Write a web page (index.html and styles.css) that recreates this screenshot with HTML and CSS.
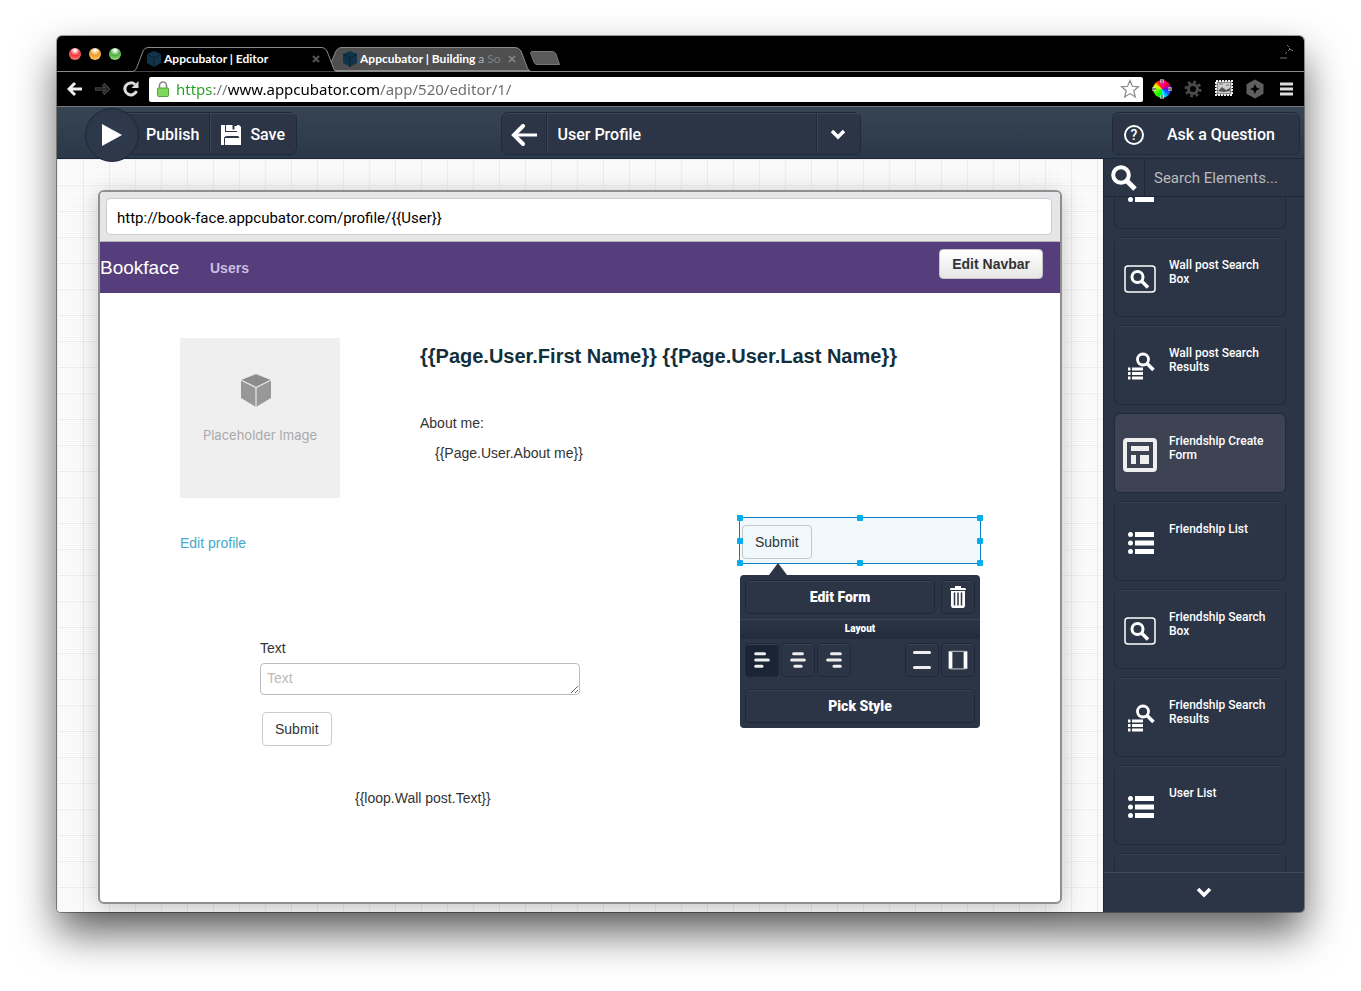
FILE: index.html
```html
<!DOCTYPE html>
<html lang="en">
<head>
<meta charset="utf-8">
<title>Appcubator | Editor</title>
<link rel="stylesheet" href="styles.css">
</head>
<body>
<svg class="defs" aria-hidden="true">
  <symbol id="cube" viewBox="0 0 14 16"><path d="M7 0l7 3v9l-7 4-7-4V3z" fill="#12344a"/><path d="M0 3l7 4 7-4M7 7v9" fill="none" stroke="#05202f" stroke-width="1"/></symbol>
  <symbol id="lens" viewBox="0 0 26 26"><circle cx="10" cy="10" r="7.8" fill="none" stroke="#fff" stroke-width="4"/><path d="M16 16l8 8" stroke="#fff" stroke-width="5"/></symbol>
  <symbol id="list" viewBox="0 0 34 34"><g fill="#fff"><circle cx="7.500" cy="8.500" r="2.500"/><circle cx="7.500" cy="17" r="2.500"/><circle cx="7.500" cy="25.500" r="2.500"/><path d="M12 6h19v5H12zM12 14.500h19v5H12zM12 23h19v5H12z"/></g></symbol>
  <symbol id="searchbox" viewBox="0 0 34 34"><rect x="2" y="4" width="30" height="26" rx="3" fill="none" stroke="#fff" stroke-width="1.500"/><circle cx="14.500" cy="15" r="5.500" fill="none" stroke="#fff" stroke-width="3"/><path d="M18.500 19l6.500 6.500" stroke="#fff" stroke-width="3.500"/></symbol>
  <symbol id="results" viewBox="0 0 34 34"><circle cx="20" cy="9.500" r="5.500" fill="none" stroke="#fff" stroke-width="2.800"/><path d="M24 13.500l6.500 6.500" stroke="#fff" stroke-width="3.500"/><path d="M5 17.500h2.500v3H5zM5 22h2.500v3H5zM5 26.500h2.500v3H5zM9 17.500h11v3H9zM9 22h11v3H9zM9 26.500h11v3H9z" fill="#fff"/></symbol>
  <symbol id="form" viewBox="0 0 34 34"><rect x="2" y="2" width="30" height="30" rx="2" fill="none" stroke="#eee" stroke-width="4"/><path d="M8 8h18v5H8zM8 17h5v9H8zM17 17h9v9h-9z" fill="#eee"/></symbol>
  <symbol id="down" viewBox="0 0 16 11"><path d="M2 2l6 6 6-6" fill="none" stroke="#fff" stroke-width="3.500"/></symbol>
</svg>

<div class="window">
  <div class="tabstrip">
    <div class="lights"><button class="light red" aria-label="Close"></button><button class="light amber" aria-label="Minimize"></button><button class="light green" aria-label="Zoom"></button></div>
    <div class="tab tab-active">
      <svg class="tab-shape" viewBox="0 0 204 25"><path d="M0 24.500Q3 23.500 4 20L10 4Q11.500 .500 15 .500H189Q192 .500 194 4L200 20Q201 24.500 204 24.500" fill="#000" stroke="#8a8a8a"/></svg>
      <svg class="favicon"><use href="#cube"/></svg><span class="tab-title">Appcubator | Editor</span><button class="tab-close" aria-label="Close tab"><svg viewBox="0 0 8 8"><path d="M1 1l6 6M7 1L1 7" stroke="#555" stroke-width="2"/></svg></button>
    </div>
    <div class="tab tab-back">
      <svg class="tab-shape" viewBox="0 0 204 25"><path d="M4 23.500Q2 22 1 18L7 4Q9 .500 12 .500H186Q190 .500 192 4L198 20Q199 23.500 201 23.500z" fill="#4f4f4f" stroke="#8a8a8a"/></svg>
      <svg class="favicon"><use href="#cube"/></svg><span class="tab-title">Appcubator | Building <span class="fade1">a</span> <span class="fade2">So</span></span><button class="tab-close" aria-label="Close tab"><svg viewBox="0 0 8 8"><path d="M1 1l6 6M7 1L1 7" stroke="#8a8a8a" stroke-width="1.500"/></svg></button>
    </div>
    <button class="newtab" aria-label="New tab"><svg viewBox="0 0 30 14"><path d="M3 .500H22Q25 .500 26 3L29.500 13.500H7Q5 13.500 4 11L.500 2Q.500 .500 3 .500z" fill="#5a5a5a" stroke="#777"/></svg></button>
    <svg class="expand" viewBox="0 0 14 14"><path d="M0 13h7M5 9l2-2M7 0l2 2M8 6l2-2 3 2M9 3l1 1" stroke="#777" fill="none"/></svg>
  </div>

  <div class="toolbar">
    <button class="nav" aria-label="Back"><svg viewBox="0 0 16 14"><path d="M8 1L2 7l6 6M2 7h13" fill="none" stroke="#eee" stroke-width="3"/></svg></button>
    <button class="nav" aria-label="Forward"><svg viewBox="0 0 16 14"><path d="M8 2l5 5-5 5M0 7h12" fill="none" stroke="#444" stroke-width="3.500"/><path d="M8 2l5 5-5 5M1 7h11" fill="none" stroke="#111" stroke-width="1"/></svg></button>
    <button class="nav reload" aria-label="Reload"><svg viewBox="0 0 16 16"><path d="M13.500 10A6 6 0 1 1 12 3.500" fill="none" stroke="#ddd" stroke-width="3"/><path d="M15.500 0v7H8.500z" fill="#ddd"/></svg></button>
    <div class="omnibox">
      <svg class="lock" viewBox="0 0 12 16"><path d="M2.500 8V4.500a3.500 3.500 0 0 1 7 0V8" fill="none" stroke="#888" stroke-width="1.600"/><rect x=".5" y="7" width="11" height="8.500" rx="1" fill="#7fd85c" stroke="#55a33a"/></svg>
      <input class="address" aria-label="Address" value="https://www.appcubator.com/app/520/editor/1/">
      <svg class="star" viewBox="0 0 20 20"><path d="M10 1.500l2.400 5.800 6.100.500-4.700 4 1.500 6.200-5.300-3.400L4.700 18l1.500-6.200-4.700-4 6.100-.500z" fill="#fff" stroke="#888" stroke-width="1.200"/></svg>
    </div>
    <div class="extensions">
      <button class="ext wheel" aria-label="Color picker"><span class="disc"></span><svg viewBox="0 0 20 20"><path d="M10 0v4M10 16v4M0 10h4M16 10h4" stroke="#fff" stroke-width="3"/><path d="M10 0v4M10 16v4M0 10h4M16 10h4" stroke="#000"/></svg></button>
      <button class="ext" aria-label="Settings"><svg viewBox="0 0 20 20"><circle cx="10" cy="10" r="4.500" fill="none" stroke="#4a4a4a" stroke-width="3"/><circle cx="10" cy="10" r="7" fill="none" stroke="#4a4a4a" stroke-width="3" stroke-dasharray="2.750"/></svg></button>
      <button class="ext" aria-label="Screenshot"><svg viewBox="0 0 20 20"><rect x="2" y="2" width="16" height="14" fill="#888" stroke="#eee" stroke-width="2" stroke-dasharray="2 1"/><rect x="4" y="4" width="12" height="10" fill="#ccc"/><path d="M4 12l4-4 4 3 4-2v3l-6 1z" fill="#555"/><path d="M5 5h4M12 6h3" stroke="#777"/></svg></button>
      <button class="ext" aria-label="Extension"><svg viewBox="0 0 20 20"><path d="M10 .500l8.500 4.800v9.500L10 19.500l-8.500-4.700V5.300z" fill="#5f5f5f"/><path d="M10 5l1.500 3.500L15 10l-3.500 1.500L10 15l-1.500-3.500L5 10l3.500-1.500z"/></svg></button>
      <button class="ext" aria-label="Menu"><svg viewBox="0 0 20 20"><path d="M4 5h13M4 10h13M4 15h13" stroke="#ddd" stroke-width="3"/></svg></button>
    </div>
  </div>

  <header class="appbar">
    <div class="group publish-group">
      <button class="play" aria-label="Run"><svg viewBox="0 0 22 24"><path d="M1 1l20 11L1 23z" fill="#fff"/></svg></button>
      <button class="cell publish">Publish</button>
      <button class="cell save"><svg viewBox="0 0 20 20"><path d="M0 0h4v7h12V0h2l2 2v18h-2v-8H4l-1 8H0z" fill="#fff"/><path d="M5 0h7v6H5zM4 13h15v7H4z" fill="#fff"/><path d="M12 1h4v5h-4z" fill="#fff"/><path d="M12.500 0v4.500" stroke="#2c3546" stroke-width="2"/><path d="M3.500 18v-5q0-1.500 2-1.500h12" fill="none" stroke="#2c3546"/></svg>Save</button>
    </div>
    <div class="group page-group">
      <button class="cell back" aria-label="Back to pages"><svg viewBox="0 0 26 22"><path d="M12 2l-9 9 9 9" fill="none" stroke="#fff" stroke-width="4" stroke-linecap="round"/><path d="M3 11h23" stroke="#fff" stroke-width="3"/></svg></button>
      <button class="cell page-name">User Profile</button>
      <button class="cell caret" aria-label="Choose page"><svg><use href="#down"/></svg></button>
    </div>
    <button class="group ask"><span class="qmark">?</span><span>Ask a Question</span></button>
  </header>

  <div class="workspace">
    <main class="desk">
      <div class="frame">
        <div class="urlbar"><input class="page-url" aria-label="Page URL" value="http://book-face.appcubator.com/profile/{{User}}"></div>
        <nav class="navbar"><a class="brand" href="#">Bookface</a><a class="navlink" href="#">Users</a><button class="edit-navbar">Edit Navbar</button></nav>
        <div class="canvas">
          <div class="placeholder">
            <svg viewBox="0 0 32 34"><path d="M16 0l15 6v18L16 33 1 24V6z" fill="#989898"/><path d="M16 1l14 5-14 7L2 6z" fill="#8c8c8c"/><path d="M1 6l15 7.500L31 6M16 13.500V33" fill="none" stroke="#e6e6e6" stroke-width="1.200"/></svg>
            <span>Placeholder Image</span>
          </div>
          <h1 class="name">{{Page.User.First Name}} {{Page.User.Last Name}}</h1>
          <p class="about-label">About me:</p>
          <p class="about">{{Page.User.About me}}</p>
          <a class="edit-profile" href="#">Edit profile</a>
          <div class="selected">
            <button class="btn">Submit</button>
            <i class="handle nw"></i><i class="handle n"></i><i class="handle ne"></i><i class="handle w"></i><i class="handle e"></i><i class="handle sw"></i><i class="handle s"></i><i class="handle se"></i>
            <div class="popup">
              <div class="popup-row">
                <button class="tool wide">Edit Form</button>
                <button class="tool" aria-label="Delete"><svg viewBox="0 0 16 22"><path d="M5 0h6v2h4q1 0 1 2H0Q0 2 1 2h4zM1 5h14v14q0 3-2 3H3q-2 0-2-3z" fill="#fff"/><path d="M4.500 6.500v13M8 6.500v13M11.500 6.500v13" stroke="#2c3546" stroke-width="1.500"/></svg></button>
              </div>
              <div class="popup-title">Layout</div>
              <div class="popup-row layout-row">
                <button class="tool pressed" aria-label="Align left"><svg viewBox="0 0 16 16"><path d="M3 3h7M3 8h10M3 13h5" class="bars"/></svg></button>
                <button class="tool" aria-label="Align center"><svg viewBox="0 0 16 16"><path d="M4.500 3h7M3 8h10M5.500 13h5" class="bars"/></svg></button>
                <button class="tool" aria-label="Align right"><svg viewBox="0 0 16 16"><path d="M6 3h7M3 8h10M8 13h5" class="bars"/></svg></button>
                <span class="spacer"></span>
                <button class="tool" aria-label="Vertical padding"><svg viewBox="0 0 16 16"><path d="M2 2h12M2 14h12" class="bars"/></svg></button>
                <button class="tool" aria-label="Horizontal padding"><svg viewBox="0 0 16 16"><path d="M2 1v14M14 1v14" stroke="#fff" stroke-width="3"/><path d="M2 1h12M2 15h12" stroke="#aaa" stroke-width="1"/></svg></button>
              </div>
              <div class="popup-row"><button class="tool wide">Pick Style</button></div>
            </div>
          </div>
          <form class="post-form">
            <label for="post-text">Text</label>
            <textarea id="post-text" placeholder="Text"></textarea>
            <button class="btn" type="button">Submit</button>
          </form>
          <p class="loop">{{loop.Wall post.Text}}</p>
        </div>
      </div>
    </main>

    <aside class="sidebar">
      <div class="search"><label for="element-search" aria-label="Search elements"><svg><use href="#lens"/></svg></label><input id="element-search" placeholder="Search Elements..."></div>
      <div class="cards">
        <div class="cards-inner">
          <button class="card" aria-label="List"><svg><use href="#list"/></svg></button>
          <button class="card"><svg><use href="#searchbox"/></svg><span>Wall post Search Box</span></button>
          <button class="card"><svg><use href="#results"/></svg><span>Wall post Search Results</span></button>
          <button class="card current"><svg><use href="#form"/></svg><span>Friendship Create Form</span></button>
          <button class="card"><svg><use href="#list"/></svg><span>Friendship List</span></button>
          <button class="card"><svg><use href="#searchbox"/></svg><span>Friendship Search Box</span></button>
          <button class="card"><svg><use href="#results"/></svg><span>Friendship Search Results</span></button>
          <button class="card"><svg><use href="#list"/></svg><span>User List</span></button>
          <button class="card" aria-label="More elements"></button>
        </div>
      </div>
      <button class="more" aria-label="Scroll down"><svg><use href="#down"/></svg></button>
    </aside>
  </div>
</div>
</body>
</html>
```

FILE: styles.css
```css
* { box-sizing: border-box; }
body {
  margin: 0;
  min-height: 100vh;
  padding: 36px 57px 79px;
  display: flex;
  background: #fff;
  font: 14px/20px "Liberation Sans", Arial, sans-serif;
  color: #333;
}
button, input, textarea { font: inherit; color: inherit; margin: 0; padding: 0; border: 0; background: none; border-radius: 0; outline: 0; }
button { cursor: pointer; }
a { text-decoration: none; }
p, h1 { margin: 0; }
svg { display: block; flex: none; }
.defs { position: absolute; width: 0; height: 0; }

.window {
  flex: 1;
  min-width: 0;
  display: flex;
  flex-direction: column;
  border-radius: 5px 5px 4px 4px;
  box-shadow: 0 0 0 1px rgba(0, 0, 0, .35), 0 21px 42px rgba(0, 0, 0, .62);
}

/* Tab strip */
.tabstrip {
  height: 36px;
  display: flex;
  align-items: flex-end;
  background: #000;
  border-bottom: 1px solid #8a8a8a;
  border-radius: 5px 5px 0 0;
}
.lights { display: flex; gap: 8px; padding: 0 12px; align-self: center; width: 76px; }
.light { width: 12px; height: 12px; border-radius: 6px; }
.red { background: radial-gradient(circle at 50% 20%, #fff 5%, #f0383c 45%, #ff9a90); }
.amber { background: radial-gradient(circle at 50% 20%, #fff 5%, #ee9a28 45%, #ffe070); }
.green { background: radial-gradient(circle at 50% 20%, #fff 5%, #4fae43 45%, #b5f09a); }
.tab {
  position: relative;
  width: 196px;
  height: 24px;
  display: flex;
  align-items: center;
  padding: 0 9px 0 14px;
  color: #fff;
  font: bold 12px/16px "Lato", sans-serif;
}
.tab-active { z-index: 1; }
.tab-shape { position: absolute; left: 0; top: 0; width: 204px; height: 25px; }
.favicon { position: relative; width: 14px; height: 16px; margin-right: 3px; }
.tab-title { position: relative; flex: 1; white-space: nowrap; }
.fade1 { color: #b5b5b5; font-weight: normal; }
.fade2 { color: #808080; font-weight: normal; }
.tab-close { position: relative; }
.tab-close svg { width: 8px; height: 8px; }
.newtab { align-self: center; margin: 9px 0 0 5px; }
.newtab svg { width: 30px; height: 14px; }
.expand { width: 14px; height: 14px; margin: auto 10px 12px auto; }

/* Address row */
.toolbar {
  height: 35px;
  display: flex;
  align-items: center;
  padding: 0 8px 0 10px;
  background: #000;
  border-bottom: 1px solid #777;
}
.nav { width: 28px; }
.nav svg { width: 16px; height: 16px; }
.reload { width: 26px; }
.omnibox { flex: 1; height: 25px; display: flex; align-items: center; padding: 0 3px 0 8px; background: #fff; border-radius: 2px; }
.lock { width: 12px; height: 16px; }
.address {
  flex: 1;
  min-width: 0;
  height: 24px;
  margin-left: 7px;
  font: 15px/24px "Noto Sans", sans-serif;
  color: #666;
  background: linear-gradient(90deg, #1fa01f 36px, #777 36px, #777 52px, #000 52px, #000 204px, #6a6a6a 204px);
  -webkit-background-clip: text;
  background-clip: text;
  -webkit-text-fill-color: transparent;
}
.star { width: 20px; height: 20px; }
.extensions { display: flex; gap: 11px; margin-left: 9px; }
.ext { position: relative; width: 20px; height: 20px; }
.ext svg { position: relative; width: 20px; height: 20px; }
.disc { position: absolute; inset: 1px; border-radius: 50%; background: conic-gradient(#f0c, #f03, #60f 90deg, #07f, #0ff 170deg, #0f0 200deg, #8f0 270deg, #fe0, #f20 330deg, #f0c); }

/* Editor header */
.appbar {
  position: relative;
  z-index: 2;
  height: 52px;
  display: grid;
  grid-template-columns: 1fr 360px 1fr;
  align-items: center;
  padding: 2px 4px 0;
  background: linear-gradient(#374453, #2b3849);
  border-bottom: 1px solid #1c2738;
  font: 500 16px/20px "Roboto", sans-serif;
  color: #fff;
}
.group { height: 43px; display: flex; background: #2c3546; border: 1px solid #1e293a; border-radius: 7px; box-shadow: inset 0 1px #394454; }
.publish-group { justify-self: start; margin-left: 48px; }
.play {
  width: 54px;
  height: 54px;
  margin: -5px 0 0 -25px;
  display: grid;
  place-items: center;
  background: radial-gradient(#303d4e, #2a3446);
  border: 1px solid #1c2738;
  border-radius: 50%;
}
.play svg { width: 22px; height: 24px; }
.cell { display: flex; align-items: center; justify-content: center; padding-top: 2px; }
.cell + .cell { border-left: 1px solid #1e293a; box-shadow: inset 1px 1px #394454; }
.publish { padding: 2px 10px 0 7px; }
.save { gap: 9px; padding: 2px 11px 0; }
.save svg { width: 20px; height: 20px; }
.back { width: 44px; }
.back svg { width: 26px; height: 22px; }
.page-name { flex: 1; justify-content: flex-start; padding: 2px 11px 0; }
.caret { width: 44px; }
.caret svg { width: 16px; height: 11px; }
.ask { justify-self: end; width: 188px; align-items: center; gap: 23px; padding: 2px 0 0 11px; }
.qmark { width: 20px; height: 20px; border: 2px solid #fff; border-radius: 50%; font-size: 14px; line-height: 16px; text-align: center; }

/* Workspace */
.workspace { flex: 1; display: flex; min-height: 0; }
.desk {
  flex: 1;
  min-width: 0;
  padding: 31px 41px 8px;
  display: flex;
  border-radius: 0 0 0 4px;
  background:
    linear-gradient(90deg, transparent 25px, #ededed 25px) 1px 0 / 26px 26px,
    linear-gradient(transparent 25px, #ededed 25px) 0 1px / 26px 26px,
    conic-gradient(#f1f1f1 25%, transparent 0) 0 0 / 2px 2px #fcfcfc;
}
.frame {
  flex: 1;
  min-width: 0;
  display: flex;
  flex-direction: column;
  border: 2px solid #8f8f91;
  border-radius: 6px;
  background: #fff;
  box-shadow: 0 4px 22px rgba(0, 0, 0, .22);
}
.urlbar { padding: 6px 8px 6px 6px; background: #e6e6e8; border-bottom: 1px solid #b4b4b6; border-radius: 4px 4px 0 0; }
.page-url { display: block; width: 100%; height: 37px; padding: 2px 10px 0; background: #fff; border: 1px solid #ccc; border-radius: 4px; color: #000; font: 15px/20px "Roboto", sans-serif; }
.navbar { height: 51px; display: flex; align-items: center; background: #563d7c; padding-right: 17px; }
.brand { width: 110px; color: #fff; font-size: 19px; }
.navlink { color: #cbbde2; font-weight: bold; }
.edit-navbar { height: 30px; margin: 0 0 8px auto; padding: 0 12px; background: linear-gradient(#fff, #e6e6e6); border: 1px solid #c5c5c5; border-radius: 4px; font-weight: bold; }

/* Page content snaps to 12 columns and 15px rows */
.canvas { flex: 1; display: grid; grid-template-columns: repeat(12, minmax(0, 1fr)); grid-auto-rows: 15px; }
.canvas > * { white-space: nowrap; }
.placeholder { grid-area: 4 / 2 / span 11 / span 2; height: 160px; display: flex; flex-direction: column; align-items: center; gap: 17px; padding-top: 36px; background: #efefef; color: #aaa; font: 13px/20px "Inter", sans-serif; }
.placeholder svg { width: 32px; height: 34px; margin-right: 8px; }
.name { grid-area: 4 / 5 / span 3 / span 8; font-size: 20px; line-height: 36px; color: #12303c; }
.about-label { grid-area: 9 / 5 / span 2 / span 4; }
.about { grid-area: 11 / 5 / span 2 / span 4; padding-left: 15px; }
.edit-profile { grid-area: 17 / 2 / span 2 / span 2; color: #46a9cb; }
.loop { grid-area: 34 / 4 / span 2 / span 4; padding-left: 15px; }
.btn { height: 34px; padding: 0 12px; margin-left: 2px; border: 1px solid #ccc; border-radius: 4px; font-size: 14px; }
.post-form { grid-area: 24 / 3 / span 8 / span 4; }
.post-form label { display: block; margin-bottom: 5px; }
.post-form textarea { display: block; width: 100%; height: 32px; padding: 4px 6px; margin-bottom: 17px; border: 1px solid #bbb; border-radius: 4px; }
.post-form textarea::placeholder { color: #bbb; }

.selected { position: relative; grid-area: 16 / 9 / span 3 / span 3; margin: -1px; padding: 7px 0 0; background: #f0f8fb; border: 1px solid #0a7fc2; }
.selected .btn { border-color: #c2c8ca; }
.handle { position: absolute; width: 6px; height: 6px; margin: -3px; background: #00aeef; border-radius: 1px; }
.nw, .n, .ne { top: 0; }
.w, .e { top: 50%; }
.sw, .s, .se { top: 100%; }
.nw, .w, .sw { left: 0; }
.n, .s { left: 50%; }
.ne, .e, .se { left: 100%; }

/* Form settings popup */
.popup { position: absolute; z-index: 3; top: 57px; left: 0; width: 240px; padding: 5px 0; background: #2c3546; border-radius: 4px; color: #fff; font: 900 14px/20px "Roboto", sans-serif; }
.popup::before { content: ""; position: absolute; left: 29px; top: -12px; border: solid transparent; border-width: 0 9px 12px; border-bottom-color: #2c3546; }
.popup-row { display: flex; gap: 2px; padding: 0 5px; }
.popup-row:first-child { gap: 6px; }
.tool { width: 34px; height: 34px; display: grid; place-items: center; border: 1px solid #1f293a; border-radius: 4px; box-shadow: inset 0 1px #384252; }
.tool.wide { flex: 1; }
.tool.pressed { background: #1b2435; }
.tool svg { width: 20px; height: 20px; }
.popup-row:first-child svg { width: 16px; height: 22px; }
.bars { stroke: #eee; stroke-width: 2.500; stroke-linecap: round; }
.popup-title { margin: 5px 0 4px; height: 20px; border-top: 1px solid #3a4454; background: linear-gradient(#2c3546, #222b3b); font-size: 10px; line-height: 18px; text-align: center; }
.layout-row { margin-bottom: 12px; }
.spacer { flex: 1; }

/* Element gallery */
.sidebar { width: 201px; flex: none; display: flex; flex-direction: column; background: #2c3546; border-left: 1px solid #1c2738; border-radius: 0 0 4px 0; color: #fff; }
.search { height: 38px; display: flex; border-bottom: 1px solid #1c2738; }
.search label { width: 41px; display: grid; place-items: center; border-right: 1px solid #1c2738; }
.search svg { width: 26px; height: 26px; }
.search input { flex: 1; min-width: 0; padding: 0 0 0 9px; font: 15px/20px "Roboto", sans-serif; }
.search input::placeholder { color: #bbb; }
.cards { flex: 1 1 0; min-height: 0; overflow: hidden; padding: 0 18px 0 10px; }
.cards-inner { display: grid; gap: 8px; margin-top: -48px; }
.card { height: 80px; display: flex; gap: 12px; padding: 20px 8px 0; border: 1px solid #1e293a; border-radius: 6px; box-shadow: inset 0 1px #384252; text-align: left; font: 500 12px/14px "Roboto", sans-serif; }
.card.current { background: #3d4353; }
.card svg { width: 34px; height: 34px; margin-top: 4px; }
.more { height: 40px; display: grid; place-items: center; border-top: 1px solid #414b5a; }
.more svg { width: 16px; height: 11px; }
```
